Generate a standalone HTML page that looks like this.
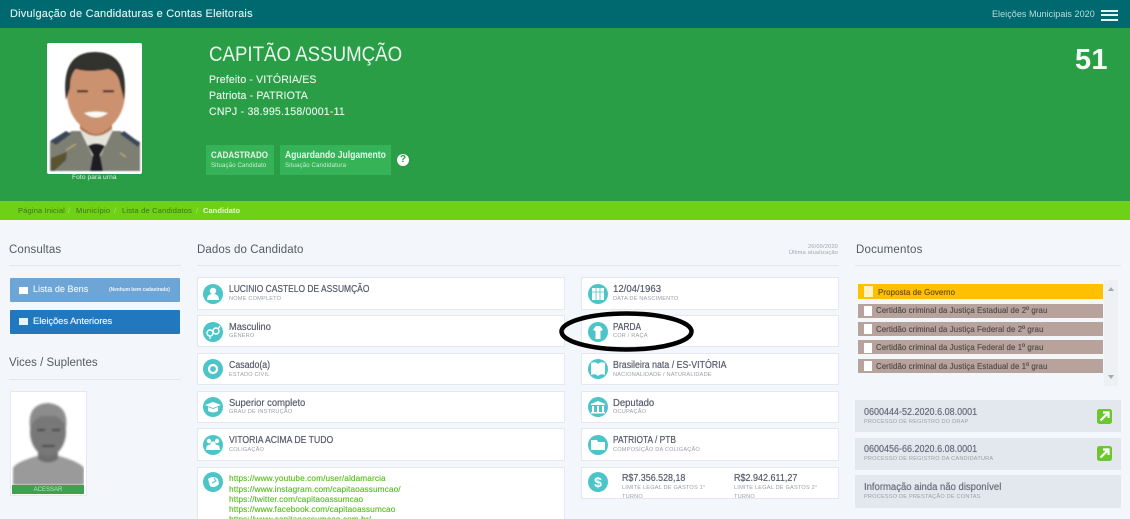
<!DOCTYPE html>
<html lang="pt-BR">
<head>
<meta charset="utf-8">
<title>Divulgação de Candidaturas e Contas Eleitorais</title>
<style>
html,body{margin:0;padding:0;width:1130px;height:519px;overflow:hidden;background:#f3f7fb}
#p{position:relative;width:1130px;height:519px;overflow:hidden;font-family:"Liberation Sans",sans-serif;filter:blur(.35px);background:#f3f7fb}
#p div,#p svg{position:absolute}
.t{white-space:nowrap;line-height:1;transform-origin:left center}
.card{background:#fff;border:1px solid #e4e8ef;box-sizing:border-box}
.h{font-size:11.5px;color:#555b60}
.rule{height:1px;background:#e3e7ec}
.v{font-size:10px;color:#5c5f70;text-shadow:0 0 .5px #5c5f70;margin-top:1px}
.s{font-size:5.6px;color:#9a9ea8;letter-spacing:.2px;margin-top:1px}
.doc{background:#b7a29c;left:858px;width:245px;height:14px}
.doct{font-size:8.4px;color:#554c4c;letter-spacing:.12px;left:876px;transform:scaleX(.93);text-shadow:0 0 .4px #554c4c}
.pan{background:#e3e7ee;left:855px;width:266px}
.ic{left:0;top:0}
.lk{font-size:8.3px;color:#62c02a;left:229px;letter-spacing:.08px;text-shadow:0 0 .4px #62c02a}
.num{font-size:10px;color:#6a6f7c;text-shadow:0 0 .5px #6a6f7c;margin-top:1px}
</style>
</head>
<body>
<div id="p">
  <div style="left:0;top:0;width:1130px;height:28px;background:#00696f"></div>
  <div style="left:0;top:28px;width:1130px;height:173px;background:#2a9d47"></div>
  <div style="left:0;top:201px;width:1130px;height:19px;background:#6fd018"></div>

  <div class="t" style="left:10px;top:9px;font-size:11px;color:#d8ecec;letter-spacing:.2px;text-shadow:0 0 .4px #d8ecec">Divulgação de Candidaturas e Contas Eleitorais</div>
  <div class="t" style="left:992px;top:10px;font-size:9px;color:#b9dcdc;letter-spacing:.05px">Eleições Municipais 2020</div>
  <div style="left:1101px;top:10px;width:17px;height:2px;background:#e6f2f2"></div>
  <div style="left:1101px;top:14px;width:17px;height:2px;background:#e6f2f2"></div>
  <div style="left:1101px;top:19px;width:17px;height:2px;background:#e6f2f2"></div>

  <svg style="left:47px;top:43px" width="96" height="132" viewBox="47 43 96 132">
    <defs><filter id="b1" x="-20%" y="-20%" width="140%" height="140%"><feGaussianBlur stdDeviation=".8"/></filter>
    <filter id="b2" x="-20%" y="-20%" width="140%" height="140%"><feGaussianBlur stdDeviation="1"/></filter></defs>
    <rect x="47" y="43" width="95" height="131" rx="2" fill="#fff"/>
    <g filter="url(#b1)">
      <path d="M50 171V142L72 131H120L140 142V171Z" fill="#7d7f73"/>
      <path d="M50 141L66 131L71 134L56 145Z" fill="#3a4658"/>
      <path d="M140 143L124 131L120 134L138 147Z" fill="#3a4658"/>
      <path d="M80 130L93 157H100L113 130L108 122H84Z" fill="#e4e4da"/>
      <path d="M88 146Q96 141 105 146L100 155L103 171H90L93 155Z" fill="#1e1f20"/>
      <path d="M80 118H112V129Q96 143 80 129Z" fill="#b4795a"/>
      <path d="M67 92Q67 64 96 62Q125 64 125 92Q125 112 113 124Q103 134 96 134Q89 134 79 124Q67 112 67 92Z" fill="#cc9270"/>
      <path d="M66 100Q60 52 95 52Q130 52 124 100L120 84Q118 72 108 69Q90 73 76 69Q70 74 70 88Z" fill="#33302e"/>
      <path d="M84 113Q96 110 108 113Q96 122 84 113Z" fill="#fbfbf6"/>
      <rect x="77" y="90" width="11" height="2.500" fill="#5b3d2d"/>
      <rect x="103" y="90" width="11" height="2.500" fill="#5b3d2d"/>
      <path d="M51 158L67 152L66 160L54 171H51Z" fill="#5a5332"/>
      <path d="M66 150L76 144M120 153L126 157" stroke="#c0b070" stroke-width="1.200"/>
    </g>
  </svg>
  <div class="t" style="left:72px;top:175px;font-size:6.6px;color:#e3f3e6;letter-spacing:.1px">Foto para urna</div>

  <div class="t" style="left:209px;top:44px;font-size:21px;color:#eaf7ec;transform:scaleX(.89)">CAPITÃO ASSUMÇÃO</div>
  <div class="t" style="left:209px;top:75px;font-size:11px;color:#e3f3e6;transform:scaleX(.955);letter-spacing:.15px;text-shadow:0 0 .4px #e3f3e6">Prefeito - VITÓRIA/ES</div>
  <div class="t" style="left:209px;top:91px;font-size:11px;color:#e3f3e6;transform:scaleX(.96);letter-spacing:.15px;text-shadow:0 0 .4px #e3f3e6">Patriota - PATRIOTA</div>
  <div class="t" style="left:209px;top:107px;font-size:11px;color:#e3f3e6;transform:scaleX(.96);letter-spacing:.22px;text-shadow:0 0 .4px #e3f3e6">CNPJ - 38.995.158/0001-11</div>

  <div style="left:206px;top:145px;width:68px;height:30px;background:#35b356"></div>
  <div class="t" style="left:211px;top:151px;font-size:9px;font-weight:bold;color:#e6f6e9;transform:scaleX(.89)">CADASTRADO</div>
  <div class="t" style="left:211px;top:163px;font-size:6px;color:#cdeed5;letter-spacing:.17px">Situação Candidato</div>
  <div style="left:280px;top:145px;width:111px;height:30px;background:#35b356"></div>
  <div class="t" style="left:285px;top:151px;font-size:10px;font-weight:bold;color:#e6f6e9;transform:scaleX(.856)">Aguardando Julgamento</div>
  <div class="t" style="left:285px;top:163px;font-size:6px;color:#cdeed5;letter-spacing:.17px">Situação Candidatura</div>
  <div style="left:397px;top:154px;width:12px;height:12px;border-radius:50%;background:#fff"></div>
  <div class="t" style="left:397px;top:155px;width:12px;text-align:center;font-size:10px;font-weight:bold;color:#2a9d47">?</div>

  <div class="t" style="left:1075px;top:46px;font-size:29px;font-weight:bold;color:#f4fbf5;letter-spacing:.2px">51</div>

  <div class="t" style="left:18px;top:207px;font-size:7.5px;color:#3f6f1c;letter-spacing:.17px">Página Inicial</div>
  <div class="t" style="left:68px;top:207px;font-size:7.5px;color:#a8e66e">/</div>
  <div class="t" style="left:76px;top:207px;font-size:7.5px;color:#3f6f1c;letter-spacing:.25px">Município</div>
  <div class="t" style="left:114px;top:207px;font-size:7.5px;color:#a8e66e">/</div>
  <div class="t" style="left:122px;top:207px;font-size:7.5px;color:#3f6f1c;letter-spacing:.2px">Lista de Candidatos</div>
  <div class="t" style="left:196px;top:207px;font-size:7.5px;color:#a8e66e">/</div>
  <div class="t" style="left:203px;top:207px;font-size:7.5px;font-weight:bold;color:#e6f8d4;letter-spacing:.05px">Candidato</div>

  <!-- Left column -->
  <div class="t h" style="left:9px;top:245px;letter-spacing:.12px">Consultas</div>
  <div class="rule" style="left:9px;top:265px;width:172px"></div>
  <div style="left:10px;top:278px;width:170px;height:24px;background:#6da6d6;border-radius:1px"></div>
  <div style="left:19px;top:287px;width:9px;height:7px;background:#fff"></div>
  <div class="t" style="left:33px;top:285px;font-size:9.5px;color:#e8f1f9;transform:scaleX(.95);letter-spacing:.05px;text-shadow:0 0 .4px #e8f1f9">Lista de Bens</div>
  <div class="t" style="left:109px;top:288px;font-size:5px;font-weight:bold;color:#e8f1f9;letter-spacing:-.1px">(Nenhum bem cadastrado)</div>
  <div style="left:10px;top:310px;width:170px;height:24px;background:#2278bf;border-radius:1px"></div>
  <div style="left:19px;top:318px;width:9px;height:7px;background:#e9f2fa"></div>
  <div class="t" style="left:33px;top:317px;font-size:9.5px;color:#e8f1f9;letter-spacing:-.12px;text-shadow:0 0 .4px #e8f1f9">Eleições Anteriores</div>
  <div class="t h" style="left:9px;top:358px">Vices / Suplentes</div>
  <div class="rule" style="left:9px;top:379px;width:172px"></div>
  <div class="card" style="left:10px;top:391px;width:77px;height:105px"></div>
  <svg style="left:12px;top:393px" width="72" height="92" viewBox="12 393 72 92">
    <rect x="12" y="393" width="72" height="92" fill="#fff"/>
    <g filter="url(#b2)">
      <path d="M13 485V468Q16 462 37 456H59Q80 462 84 468V485Z" fill="#9a9a9a"/>
      <path d="M38 445H58V459Q48 466 38 459Z" fill="#6e6e6e"/>
      <ellipse cx="48" cy="432" rx="18" ry="24" fill="#787878"/>
      <path d="M30 428Q27 404 48 403Q69 405 66 428Q61 414 48 416Q36 414 30 428Z" fill="#8c8c8c"/>
      <rect x="37" y="429" width="8" height="2" fill="#3c3c3c"/>
      <rect x="52" y="429" width="8" height="2" fill="#3c3c3c"/>
      <rect x="42" y="445" width="13" height="2" fill="#444"/>
    </g>
  </svg>
  <div style="left:12px;top:485px;width:72px;height:9px;background:#3aa34f"></div>
  <div class="t" style="left:12px;top:487px;width:72px;text-align:center;font-size:6px;color:#bfe6c6">ACESSAR</div>

  <!-- Middle column -->
  <div class="t h" style="left:197px;top:245px;letter-spacing:.09px">Dados do Candidato</div>
  <div class="rule" style="left:197px;top:265px;width:642px"></div>
  <div class="t" style="left:788px;top:245px;font-size:5.8px;color:#a4a8ae;width:50px;text-align:right;letter-spacing:.1px">26/09/2020</div>
  <div class="t" style="left:768px;top:251px;font-size:5.8px;color:#a4a8ae;width:70px;text-align:right;letter-spacing:.1px">Última atualização</div>

  <div class="card" style="left:197px;top:277px;width:368px;height:33px"></div>
  <div class="card" style="left:197px;top:315px;width:368px;height:32px"></div>
  <div class="card" style="left:197px;top:353px;width:368px;height:32px"></div>
  <div class="card" style="left:197px;top:391px;width:368px;height:32px"></div>
  <div class="card" style="left:197px;top:428px;width:368px;height:33px"></div>
  <div class="card" style="left:197px;top:467px;width:368px;height:70px"></div>
  <div class="card" style="left:581px;top:277px;width:258px;height:33px"></div>
  <div class="card" style="left:581px;top:315px;width:258px;height:32px"></div>
  <div class="card" style="left:581px;top:353px;width:258px;height:32px"></div>
  <div class="card" style="left:581px;top:391px;width:258px;height:32px"></div>
  <div class="card" style="left:581px;top:428px;width:258px;height:33px"></div>
  <div class="card" style="left:581px;top:467px;width:258px;height:32px"></div>

  <svg class="ic" width="1130" height="519" viewBox="0 0 1130 519">
    <g fill="#4cc5c9">
      <circle cx="213" cy="294" r="10"/><circle cx="213" cy="332" r="10"/><circle cx="213" cy="369" r="10"/>
      <circle cx="213" cy="407" r="10"/><circle cx="213" cy="445" r="10"/><circle cx="213" cy="482" r="10"/>
      <circle cx="598" cy="294" r="10"/><circle cx="598" cy="332" r="10"/><circle cx="598" cy="369" r="10"/>
      <circle cx="598" cy="407" r="10"/><circle cx="598" cy="445" r="10"/><circle cx="598" cy="482" r="10"/>
    </g>
    <g fill="#fff">
      <circle cx="213" cy="291" r="3.2"/><path d="M207 300Q207 294 213 294Q219 294 219 300Z"/>
      <path d="M205 405L213 402L221 405L213 408Z"/><path d="M208 407V411Q213 414 218 411V407L213 409Z"/>
      <circle cx="209" cy="441" r="2.2"/><circle cx="217" cy="441" r="2.2"/><circle cx="213" cy="444" r="2.6"/>
      <path d="M206 450Q206 443 213 445Q220 443 220 450Z"/>
      <path d="M208 479Q213 475 218 479L219 484Q214 489 210 486Z"/>
      <path d="M592 288H604V300H592Z"/>
      <path d="M596 326H600L603 330L600.500 331V339H595.500V331L593 330Z"/>
      <path d="M591 363Q595 361 598 364Q601 361 605 363V375Q601 373 598 376Q595 373 591 375Z"/>
      <path d="M598 401L605 404V405H591V404Z"/><rect x="592" y="406" width="2" height="6"/><rect x="597" y="406" width="2" height="6"/><rect x="602" y="406" width="2" height="6"/><rect x="591" y="412" width="14" height="1.500"/>
      <path d="M591 440H597L598 442H605V450H591Z"/>
    </g>
    <g fill="none" stroke="#fff">
      <circle cx="210" cy="333" r="3" stroke-width="1.400"/><circle cx="216" cy="331" r="3" stroke-width="1.400"/><path d="M218 329L220 326M210 336V339" stroke-width="1.200"/>
      <circle cx="213" cy="369" r="4" stroke-width="2.200"/>
      <path d="M592 292H604M596 288V300M600 288V300" stroke="#4cc5c9" stroke-width=".8"/>
    </g>
    <text x="598" y="487" font-family="Liberation Sans,sans-serif" font-size="14" font-weight="bold" fill="#fff" text-anchor="middle">$</text>
    <path d="M214 478L216 481L212 483" fill="none" stroke="#4cc5c9" stroke-width="1"/>
    <ellipse cx="626.500" cy="331.500" rx="65" ry="18" fill="none" stroke="#000" stroke-width="4.500"/>
  </svg>

  <div class="t v" style="left:229px;top:284px;transform:scaleX(.845)">LUCINIO CASTELO DE ASSUMÇÃO</div>
  <div class="t s" style="left:229px;top:296px">NOME COMPLETO</div>
  <div class="t v" style="left:229px;top:322px;transform:scaleX(.93)">Masculino</div>
  <div class="t s" style="left:229px;top:333px">GÊNERO</div>
  <div class="t v" style="left:229px;top:360px;transform:scaleX(.88)">Casado(a)</div>
  <div class="t s" style="left:229px;top:372px">ESTADO CIVIL</div>
  <div class="t v" style="left:229px;top:398px;transform:scaleX(.94)">Superior completo</div>
  <div class="t s" style="left:229px;top:409px">GRAU DE INSTRUÇÃO</div>
  <div class="t v" style="left:229px;top:435px;transform:scaleX(.867)">VITORIA ACIMA DE TUDO</div>
  <div class="t s" style="left:229px;top:447px">COLIGAÇÃO</div>
  <div class="t lk" style="top:474px">https://www.youtube.com/user/aldamarcia</div>
  <div class="t lk" style="top:485px">https://www.instagram.com/capitaoassumcao/</div>
  <div class="t lk" style="top:495px">https://twitter.com/capitaoassumcao</div>
  <div class="t lk" style="top:505px">https://www.facebook.com/capitaoassumcao</div>
  <div class="t lk" style="top:515px">https://www.capitaoassumcao.com.br/</div>

  <div class="t v" style="left:613px;top:284px;transform:scaleX(.96)">12/04/1963</div>
  <div class="t s" style="left:613px;top:296px">DATA DE NASCIMENTO</div>
  <div class="t v" style="left:613px;top:322px;transform:scaleX(.83)">PARDA</div>
  <div class="t s" style="left:613px;top:333px">COR / RAÇA</div>
  <div class="t v" style="left:613px;top:360px;transform:scaleX(.88)">Brasileira nata / ES-VITÓRIA</div>
  <div class="t s" style="left:613px;top:372px">NACIONALIDADE / NATURALIDADE</div>
  <div class="t v" style="left:613px;top:398px;transform:scaleX(.95)">Deputado</div>
  <div class="t s" style="left:613px;top:409px">OCUPAÇÃO</div>
  <div class="t v" style="left:613px;top:435px;transform:scaleX(.84)">PATRIOTA / PTB</div>
  <div class="t s" style="left:613px;top:447px">COMPOSIÇÃO DA COLIGAÇÃO</div>
  <div class="t v" style="left:622px;top:473px;transform:scaleX(.89)">R$7.356.528,18</div>
  <div class="t s" style="left:622px;top:485px">LIMITE LEGAL DE GASTOS 1°</div>
  <div class="t s" style="left:622px;top:494px">TURNO</div>
  <div class="t v" style="left:734px;top:473px;transform:scaleX(.9)">R$2.942.611,27</div>
  <div class="t s" style="left:734px;top:485px">LIMITE LEGAL DE GASTOS 2°</div>
  <div class="t s" style="left:734px;top:494px">TURNO</div>

  <!-- Right column -->
  <div class="t h" style="left:856px;top:245px;letter-spacing:.2px">Documentos</div>
  <div class="rule" style="left:855px;top:265px;width:266px"></div>
  <div style="left:1104px;top:280px;width:14px;height:106px;background:#eef1f4"></div>
  <svg style="left:1104px;top:280px" width="14" height="106" viewBox="0 0 14 106"><path d="M4 11L7 7L10 11Z" fill="#a8a8a8"/><path d="M4 95L7 99L10 95Z" fill="#a8a8a8"/></svg>
  <div style="left:858px;top:284px;width:245px;height:15px;background:#ffc000"></div>
  <div style="left:864px;top:286px;width:9px;height:11px;background:#fff3c4"></div>
  <div class="t" style="left:878px;top:288px;font-size:8.4px;color:#6b5200;letter-spacing:.13px;transform:scaleX(.94);text-shadow:0 0 .4px #6b5200">Proposta de Governo</div>
  <div class="doc" style="top:304px"></div><div style="left:864px;top:306px;width:8px;height:10px;background:#fff"></div>
  <div class="t doct" style="top:306px">Certidão criminal da Justiça Estadual de 2º grau</div>
  <div class="doc" style="top:322px"></div><div style="left:864px;top:324px;width:8px;height:10px;background:#fff"></div>
  <div class="t doct" style="top:325px">Certidão criminal da Justiça Federal de 2º grau</div>
  <div class="doc" style="top:340px"></div><div style="left:864px;top:343px;width:8px;height:10px;background:#fff"></div>
  <div class="t doct" style="top:343px">Certidão criminal da Justiça Federal de 1º grau</div>
  <div class="doc" style="top:359px"></div><div style="left:864px;top:361px;width:8px;height:10px;background:#fff"></div>
  <div class="t doct" style="top:362px">Certidão criminal da Justiça Estadual de 1º grau</div>

  <div class="pan" style="top:400px;height:32px"></div>
  <div class="t num" style="left:864px;top:407px;transform:scaleX(.9)">0600444-52.2020.6.08.0001</div>
  <div class="t s" style="left:864px;top:419px">PROCESSO DE REGISTRO DO DRAP</div>
  <div class="pan" style="top:438px;height:32px"></div>
  <div class="t num" style="left:864px;top:444px;transform:scaleX(.9)">0600456-66.2020.6.08.0001</div>
  <div class="t s" style="left:864px;top:456px">PROCESSO DE REGISTRO DA CANDIDATURA</div>
  <div class="pan" style="top:475px;height:33px"></div>
  <div class="t num" style="left:864px;top:482px;transform:scaleX(.95)">Informação ainda não disponível</div>
  <div class="t s" style="left:864px;top:494px">PROCESSO DE PRESTAÇÃO DE CONTAS</div>
  <svg style="left:1097px;top:409px" width="15" height="15" viewBox="0 0 15 15"><rect width="15" height="15" rx="2.500" fill="#6cc72f"/><path d="M3.500 11.500L10 5M6 3.500H11.500V9" fill="none" stroke="#fff" stroke-width="2.200"/></svg>
  <svg style="left:1097px;top:446px" width="15" height="15" viewBox="0 0 15 15"><rect width="15" height="15" rx="2.500" fill="#6cc72f"/><path d="M3.500 11.500L10 5M6 3.500H11.500V9" fill="none" stroke="#fff" stroke-width="2.200"/></svg>
</div>
</body>
</html>
